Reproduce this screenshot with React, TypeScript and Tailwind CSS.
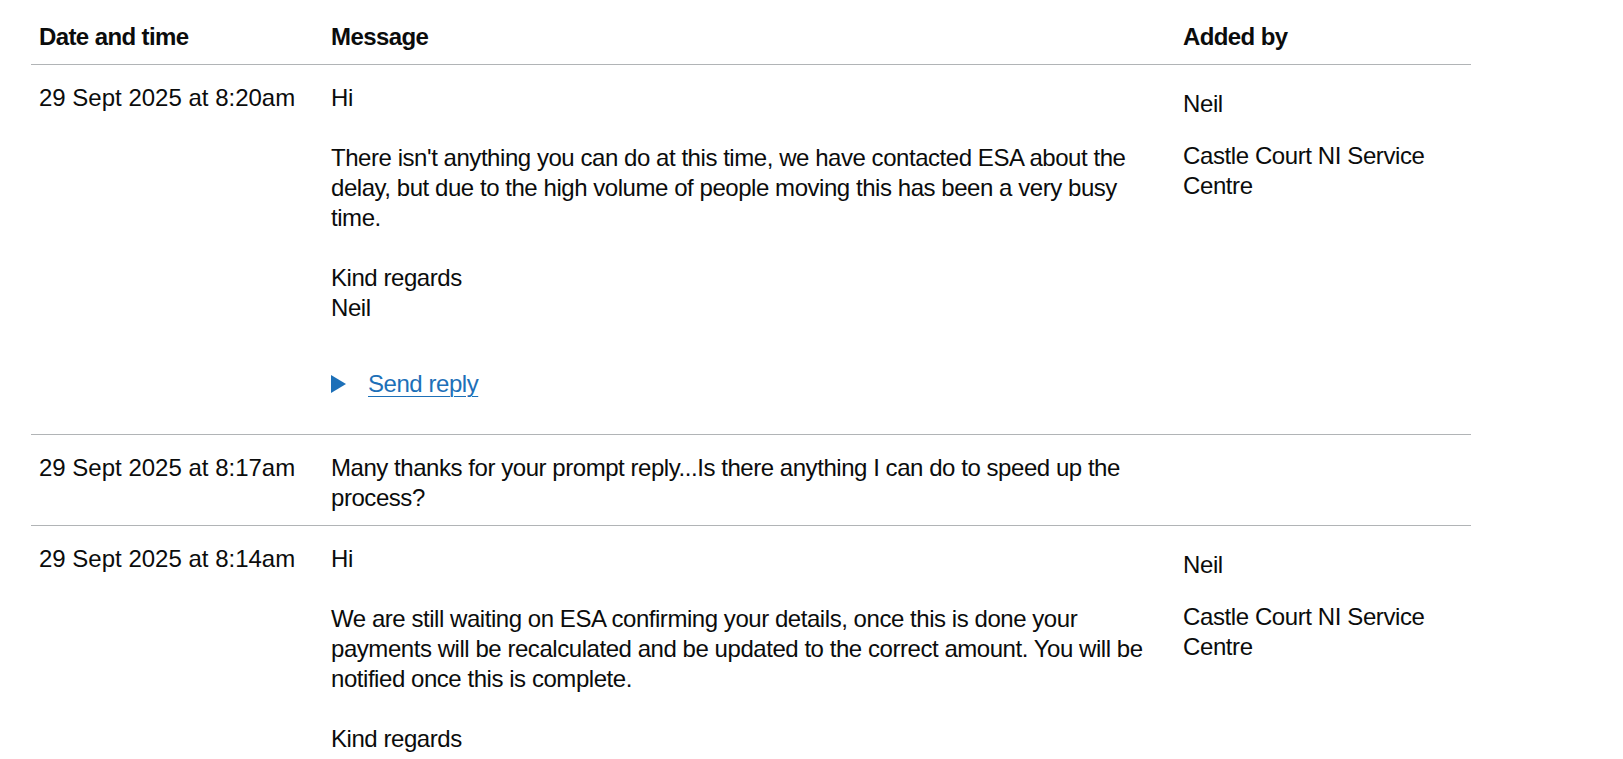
import React from 'react'

type Row = {
  date: string
  message: string[]
  addedBy: string[]
  reply?: boolean
}

const rows: Row[] = [
  {
    date: '29 Sept 2025 at 8:20am',
    message: [
      'Hi',
      '',
      "There isn't anything you can do at this time, we have contacted ESA about the delay, but due to the high volume of people moving this has been a very busy time.",
      '',
      'Kind regards',
      'Neil',
    ],
    addedBy: ['Neil', 'Castle Court NI Service Centre'],
    reply: true,
  },
  {
    date: '29 Sept 2025 at 8:17am',
    message: ['Many thanks for your prompt reply...Is there anything I can do to speed up the process?'],
    addedBy: [],
  },
  {
    date: '29 Sept 2025 at 8:14am',
    message: [
      'Hi',
      '',
      'We are still waiting on ESA confirming your details, once this is done your payments will be recalculated and be updated to the correct amount. You will be notified once this is complete.',
      '',
      'Kind regards',
      'Neil',
    ],
    addedBy: ['Neil', 'Castle Court NI Service Centre'],
  },
]

function AddedBy({ lines }: { lines: string[] }) {
  if (lines.length === 0) return null
  return (
    <div className="tracking-[-0.4px]">
      <p className="mt-[6px]">{lines[0]}</p>
      {lines.slice(1).map((l) => (
        <p key={l} className="mt-[22px]">
          {l}
        </p>
      ))}
    </div>
  )
}

export default function App() {
  return (
    <div
      className="min-h-screen bg-white text-[#0b0c0c] text-[24px] leading-[30px]"
      style={{ fontFamily: '"Liberation Sans", Arial, sans-serif' }}
    >
      <table className="ml-[31px] mt-[7px] w-[1440px] table-fixed border-collapse">
        <colgroup>
          <col className="w-[300px]" />
          <col className="w-[852px]" />
          <col className="w-[288px]" />
        </colgroup>
        <thead>
          <tr className="border-b border-[#b1b4b6] tracking-[-0.6px]">
            <th className="pl-[8px] pr-[25px] pt-[15px] pb-[12px] text-left align-top font-bold">Date and time</th>
            <th className="pr-[20px] pt-[15px] pb-[12px] text-left align-top font-bold">Message</th>
            <th className="pr-[25px] pt-[15px] pb-[12px] text-left align-top font-bold">Added by</th>
          </tr>
        </thead>
        <tbody>
          {rows.map((r) => (
            <tr key={r.date} className="border-b border-[#b1b4b6]">
              <td className="pl-[8px] pr-[25px] pt-[18px] pb-[12px] align-top">{r.date}</td>
              <td className="pr-[20px] pt-[18px] pb-[12px] align-top tracking-[-0.45px]">
                <div className="whitespace-pre-line">{r.message.join('\n')}</div>
                {r.reply && (
                  <div className="mt-[46px] mb-[23px] flex items-center gap-[22px] text-[#1d70b8]">
                    <svg width="15" height="18" viewBox="0 0 15 18" className="shrink-0">
                      <path d="M0 0 L15 9 L0 18 Z" fill="#1d70b8" />
                    </svg>
                    <a href="#" className="underline decoration-1 underline-offset-[4px]">
                      Send reply
                    </a>
                  </div>
                )}
              </td>
              <td className="pr-[25px] pt-[18px] pb-[12px] align-top">
                <AddedBy lines={r.addedBy} />
              </td>
            </tr>
          ))}
        </tbody>
      </table>
    </div>
  )
}
